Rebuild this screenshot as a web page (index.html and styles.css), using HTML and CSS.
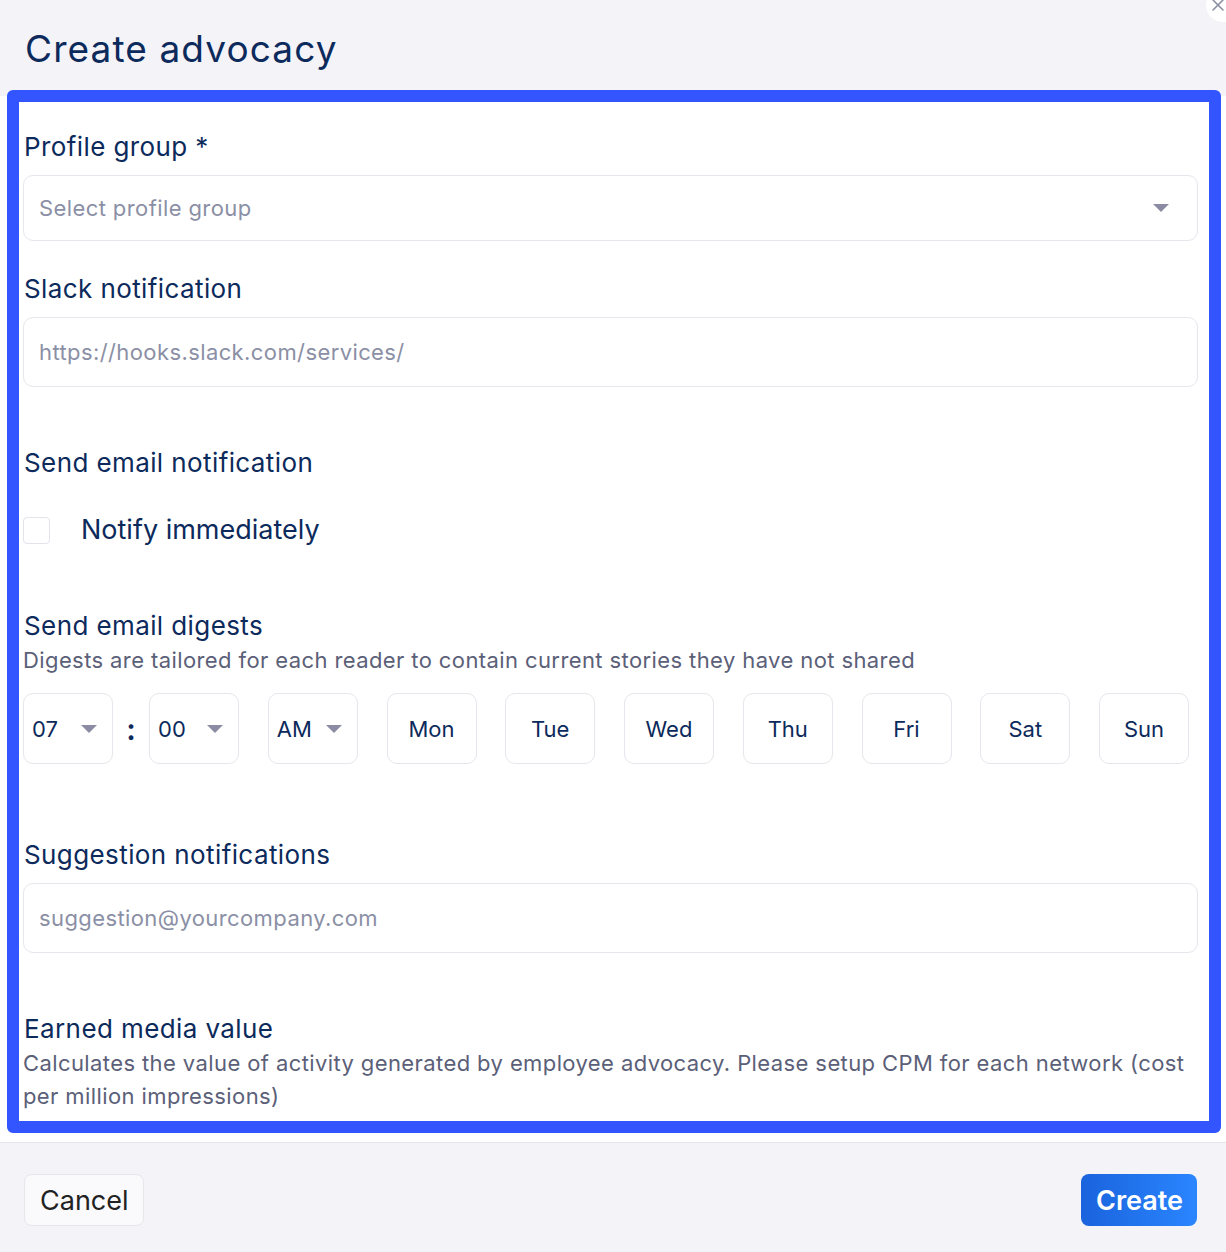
FILE: index.html
```html
<!DOCTYPE html>
<html lang="en">
<head>
    <meta charset="UTF-8">
    <meta name="viewport" content="width=device-width, initial-scale=1.0">
    <title>Create advocacy</title>
    <link rel="stylesheet" href="styles.css">
</head>
<body>
    <div class="modal">
        <button class="close-btn" aria-label="Close">
            <svg width="14" height="14" viewBox="0 0 14 14"><path d="M2 2 L12 12 M12 2 L2 12" stroke="#8a8fa3" stroke-width="1.6" fill="none" stroke-linecap="round"/></svg>
        </button>
        <h1 class="modal-title">Create advocacy</h1>

        <div class="modal-body">
            <div class="field">
                <label class="field-label">Profile group *</label>
                <div class="select">
                    <span class="placeholder">Select profile group</span>
                    <span class="caret"></span>
                </div>
            </div>

            <div class="field slack">
                <label class="field-label">Slack notification</label>
                <div class="input">
                    <span class="placeholder">https://hooks.slack.com/services/</span>
                </div>
            </div>

            <div class="field spaced">
                <label class="field-label">Send email notification</label>
                <label class="checkbox-row">
                    <span class="checkbox"></span>
                    <span>Notify immediately</span>
                </label>
            </div>

            <div class="field digests">
                <label class="field-label">Send email digests</label>
                <p class="hint">Digests are tailored for each reader to contain current stories they have not shared</p>
                <div class="digest-row">
                    <div class="time-group">
                        <div class="pill">07 <span class="caret"></span></div>
                        <span class="colon">:</span>
                        <div class="pill">00 <span class="caret"></span></div>
                    </div>
                    <div class="pill">AM <span class="caret"></span></div>
                    <div class="pill day">Mon</div>
                    <div class="pill day">Tue</div>
                    <div class="pill day">Wed</div>
                    <div class="pill day">Thu</div>
                    <div class="pill day">Fri</div>
                    <div class="pill day">Sat</div>
                    <div class="pill day">Sun</div>
                </div>
            </div>

            <div class="field spaced-lg">
                <label class="field-label">Suggestion notifications</label>
                <div class="input">
                    <span class="placeholder">suggestion@yourcompany.com</span>
                </div>
            </div>

            <div class="field spaced">
                <label class="field-label">Earned media value</label>
                <p class="hint">Calculates the value of activity generated by employee advocacy. Please setup CPM for each network (cost per million impressions)</p>
            </div>
        </div>

        <div class="modal-footer">
            <button class="btn btn-cancel">Cancel</button>
            <button class="btn btn-create">Create</button>
        </div>
    </div>
</body>
</html>
```

FILE: styles.css
```css
body {
    font-family: Inter, "Open Sans", sans-serif;
    background-color: #f3f3f8;
    margin: 0;
    padding: 0;
    color: #0c2a5b;
}
.modal {
    position: relative;
    width: 1226px;
    height: 1252px;
    overflow: hidden;
}
.close-btn {
    position: absolute;
    top: -12px;
    right: -14px;
    width: 34px;
    height: 34px;
    border-radius: 50%;
    border: none;
    background: #fff;
    display: flex;
    align-items: center;
    justify-content: center;
    padding: 0 10px 0 0;
}
.modal-title {
    font-size: 37px;
    font-weight: 400;
    letter-spacing: 1.1px;
    margin: 0;
    padding: 26px 25px 0;
    height: 70px;
    line-height: 46px;
}
.modal-body {
    position: relative;
    box-sizing: border-box;
    background: #fff;
    padding: 33px 28px 0 23px;
    height: 1046px;
}
.modal-body::after {
    content: "";
    position: absolute;
    top: -6px;
    left: 7px;
    right: 5px;
    bottom: 9px;
    border: 12px solid #3355ff;
    border-radius: 6px;
    pointer-events: none;
}
.field {
    display: flex;
    flex-direction: column;
}
.field.slack {
    margin-top: 30px;
}
.field.spaced {
    margin-top: 58px;
}
.field.digests {
    margin-top: 60px;
}
.field.spaced-lg {
    margin-top: 73px;
}
.field-label {
    font-size: 26px;
    letter-spacing: 0.4px;
    line-height: 36px;
    padding-left: 1px;
    margin-bottom: 10px;
}
.select, .input {
    box-sizing: border-box;
    border: 1px solid #e6e6ec;
    border-radius: 10px;
    height: 66px;
    display: flex;
    align-items: center;
    justify-content: space-between;
    padding: 0 28px 0 15px;
}
.input {
    height: 70px;
}
.placeholder {
    font-size: 22px;
    letter-spacing: 0.4px;
    color: #8b8fa5;
}
.caret {
    display: inline-block;
    width: 0;
    height: 0;
    border-left: 8px solid transparent;
    border-right: 8px solid transparent;
    border-top: 8px solid #8b8ba3;
}
.checkbox-row {
    display: flex;
    align-items: center;
    gap: 31px;
    font-size: 27px;
    line-height: 36px;
    margin-top: 21px;
}
.checkbox {
    width: 25px;
    height: 25px;
    border: 1px solid #e3e3ea;
    border-radius: 4px;
}
.hint {
    margin: -10px 0 0;
    font-size: 22px;
    letter-spacing: 0.4px;
    line-height: 33px;
    color: #5b6078;
}
.digest-row {
    display: flex;
    gap: 28.75px;
    margin-top: 16px;
}
.time-group {
    display: flex;
    align-items: center;
}
.colon {
    width: 36px;
    text-align: center;
    font-size: 30px;
    font-weight: 600;
}
.pill {
    width: 90px;
    height: 71px;
    box-sizing: border-box;
    border: 1px solid #e6e6ec;
    border-radius: 10px;
    display: flex;
    align-items: center;
    justify-content: space-between;
    padding: 0 15px 0 8px;
    font-size: 22px;
}
.pill.day {
    justify-content: center;
    padding: 0;
}
.modal-footer {
    border-top: 1px solid #e6e6ec;
    display: flex;
    justify-content: space-between;
    align-items: center;
    padding: 31px 29px 0 24px;
}
.btn {
    height: 52px;
    border-radius: 8px;
    font-family: inherit;
    font-size: 27px;
    padding: 0 15px;
    cursor: pointer;
}
.btn-cancel {
    width: 120px;
    background: #fafafc;
    border: 1px solid #e6e6ec;
    color: #222;
}
.btn-create {
    width: 116px;
    border: none;
    color: #fff;
    font-weight: 600;
    background: linear-gradient(90deg, #1a63dd, #2a86ff);
}
```
